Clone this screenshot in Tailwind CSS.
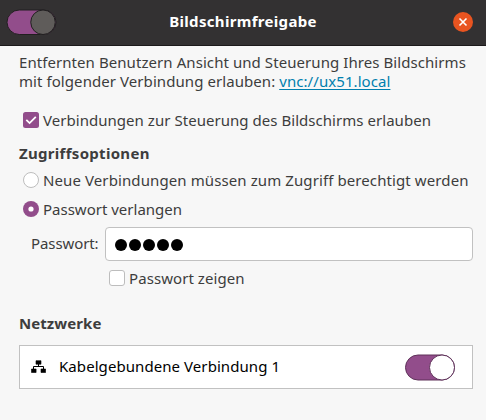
<!DOCTYPE html>
<html lang="de">

<head>
    <meta charset="UTF-8">
    <meta name="viewport" content="width=device-width, initial-scale=1.0">
    <title>Bildschirmfreigabe</title>
    <script src="https://cdn.jsdelivr.net/npm/@tailwindcss/browser@4"></script>
</head>

<body class="h-[420px] w-[486px] overflow-hidden bg-[#f7f7f7] font-['Noto_Sans',sans-serif] text-[15px] leading-[19px] tracking-[0.07px] whitespace-nowrap text-[#3d3d3d]">
    <!-- title bar -->
    <header class="flex h-[46px] items-center border-b border-[#1c1a1b] bg-[#333132] pr-[13px] pl-[6px]">
        <button type="button" aria-label="Freigabe">
            <svg class="block h-[27px] w-[51px]" viewBox="0 0 51 27" fill="none">
                <rect x="1" y="1" width="49" height="24.5" rx="12.25" fill="#924d8b" stroke="#211f20" />
                <circle cx="37" cy="13.25" r="12.25" fill="#5f5c5a" stroke="#211f20" />
            </svg>
        </button>
        <h1 class="mt-[-3px] flex-1 pr-[24px] text-center font-bold tracking-[0.32px] text-white">Bildschirmfreigabe</h1>
        <button type="button" class="-mt-px" aria-label="Schließen">
            <svg class="block h-5 w-5" viewBox="0 0 20 20" fill="none">
                <circle cx="10" cy="10" r="10" fill="#e95420" />
                <path d="M6.5 6.5l7 7m0-7l-7 7" stroke="#fff" stroke-width="1.6" />
            </svg>
        </button>
    </header>

    <main class="pt-[7px] pr-[13px] pl-[19px]">
        <p>Entfernten Benutzern Ansicht und Steuerung Ihres Bildschirms</p>
        <p>mit folgender Verbindung erlauben: <a href="#" class="text-[#007fae] underline decoration-1 underline-offset-2 [text-decoration-skip-ink:none]">vnc://ux51.local</a></p>

        <label class="mt-[19px] flex h-5 items-center gap-1 pl-1 tracking-[0.04px]">
            <svg class="h-4 w-4" viewBox="0 0 16 16" fill="none">
                <rect width="16" height="16" rx="2.5" fill="#924d8b" />
                <path d="M3.3 7.8l3.3 3.3 6.2-6.2" stroke="#fff" stroke-width="1.8" />
            </svg>
            <span>Verbindungen zur Steuerung des Bildschirms erlauben</span>
        </label>

        <!-- access options -->
        <h2 class="mt-[14px] font-bold tracking-[0.3px]">Zugriffsoptionen</h2>
        <label class="mt-[7px] flex h-5 items-center gap-1 pl-1 tracking-[0.1px]">
            <svg class="h-4 w-4" viewBox="0 0 16 16">
                <circle cx="8" cy="8" r="7.5" fill="#fff" stroke="#bdbdbd" />
            </svg>
            <span>Neue Verbindungen müssen zum Zugriff berechtigt werden</span>
        </label>
        <label class="mt-[9px] flex h-5 items-center gap-1 pl-1 tracking-[0px]">
            <svg class="h-4 w-4" viewBox="0 0 16 16">
                <circle cx="8" cy="8" r="8" fill="#924d8b" />
                <circle cx="8" cy="8" r="2.6" fill="#fff" />
            </svg>
            <span>Passwort verlangen</span>
        </label>
        <div class="mt-2 flex items-center">
            <span class="-mt-[2px] w-[86px] pl-3 tracking-[-0.1px]">Passwort:</span>
            <div class="flex h-[34px] w-[368px] items-center gap-[2px] rounded-[4px] border border-[#c1c1c1] bg-white pt-[2px] pl-[9px]">
                <i class="h-3 w-3 rounded-full bg-black"></i>
                <i class="h-3 w-3 rounded-full bg-black"></i>
                <i class="h-3 w-3 rounded-full bg-black"></i>
                <i class="h-3 w-3 rounded-full bg-black"></i>
                <i class="h-3 w-3 rounded-full bg-black"></i>
            </div>
        </div>
        <label class="mt-[7px] flex h-5 items-center gap-1 pl-[90px]">
            <span class="h-4 w-4 rounded-[3px] border border-[#bdbdbd] bg-white"></span>
            <span>Passwort zeigen</span>
        </label>

        <!-- networks -->
        <h2 class="mt-[26px] font-bold">Netzwerke</h2>
        <div class="mt-3 flex h-11 w-[454px] items-center border border-[#c1c1c1] bg-white pr-4 pl-[11px] text-black">
            <svg class="mt-[-1px] h-[13px] w-[15px]" viewBox="0 0 15 13" fill="none">
                <path d="M5 0.7h5v3.5h-5zM0.5 9h4.6v3.5h-4.6zM10 9h4.6v3.5h-4.6z" fill="#000" stroke="#000" stroke-width=".6" stroke-linejoin="round" />
                <path d="M7.5 4v2.5M2.5 9v-2.5h10v2.5" stroke="#000" />
            </svg>
            <span class="-mt-px ml-[13px] flex-1">Kabelgebundene Verbindung 1</span>
            <svg class="h-[27px] w-[52px]" viewBox="0 0 52 27" fill="none">
                <rect x="1.5" y="1" width="49" height="25" rx="12.5" fill="#924d8b" stroke="#5e3159" />
                <circle cx="38" cy="13.5" r="12.5" fill="#fff" stroke="#5e3159" />
            </svg>
        </div>
    </main>
</body>

</html>
